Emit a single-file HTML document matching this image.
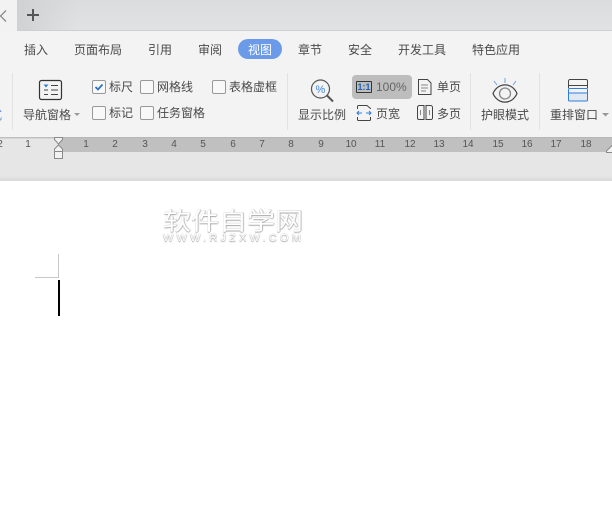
<!DOCTYPE html>
<html lang="zh"><head><meta charset="utf-8"><style>
*{box-sizing:border-box}
html,body{margin:0;padding:0;background:#fff}
#p{position:relative;width:612px;height:507px;overflow:hidden;background:#fff;font-family:"Liberation Sans","Noto Sans CJK SC",sans-serif;color:#444}
#p div,#p span.t{position:absolute;white-space:nowrap}
.t{font-size:12px;line-height:16px;color:#4a4a4a}
.cb{width:14px;height:14px;border:1px solid #999;border-radius:2px;background:#f8f8f8}
.sep{width:1px;background:#e2e2e2;top:73px;height:57px}
.r{top:139px;font-size:10px;line-height:12px;color:#555;width:20px;text-align:center}
svg{position:absolute;overflow:visible}
</style></head><body><div id="p">
<div style="left:0;top:0;width:612px;height:31px;background:linear-gradient(#dbdcde,#e1e2e4)"></div>
<div style="left:17px;top:0;width:60px;height:31px;background:linear-gradient(90deg,#d0d1d3,rgba(208,209,211,0))"></div>
<div style="left:0;top:30px;width:612px;height:1px;background:#cfcfcf"></div>
<div style="left:0;top:0;width:17px;height:31px;background:#f2f2f2"></div>
<svg style="left:0;top:0" width="40" height="31" fill="none"><path d="M6 10.500L0.500 16L6 21.500" stroke="#8a8a8a" stroke-width="1.300"/><path d="M27 15H39M33 9V21" stroke="#555" stroke-width="2"/></svg>
<div style="left:0;top:31px;width:612px;height:106px;background:#f3f3f3"></div>

<span class="t" style="left:24px;top:42px">插入</span>
<span class="t" style="left:74px;top:42px">页面布局</span>
<span class="t" style="left:148px;top:42px">引用</span>
<span class="t" style="left:198px;top:42px">审阅</span>
<div style="left:238px;top:39px;width:44px;height:20px;border-radius:10px;background:#6b9ae8"></div>
<span class="t" style="left:248px;top:42px;color:#fff">视图</span>
<span class="t" style="left:298px;top:42px">章节</span>
<span class="t" style="left:348px;top:42px">安全</span>
<span class="t" style="left:398px;top:42px">开发工具</span>
<span class="t" style="left:472px;top:42px">特色应用</span>

<div class="sep" style="left:12px"></div>
<div class="sep" style="left:287px"></div>
<div class="sep" style="left:470px"></div>
<div class="sep" style="left:539px"></div>

<span class="t" style="left:-10px;top:107px;color:#5b8fd0">式</span>

<svg style="left:39px;top:80px" width="23" height="21" fill="none"><rect x=".500" y=".500" width="22" height="19" rx="2" stroke="#333" stroke-width="1.200"/><path d="M4.500 4.500h5L7 7.500z" fill="#2f7ed8"/><path d="M12 5.500h7M12 10h7M12 14.500h7M5 10h4M5 14.500h4" stroke="#444"/></svg>
<span class="t" style="left:23px;top:107px">导航窗格</span>
<svg style="left:74px;top:113px" width="6" height="4"><path d="M0 0h6L3 3z" fill="#999"/></svg>

<div class="cb" style="left:92px;top:80px"></div>
<svg style="left:92px;top:80px" width="14" height="14" fill="none"><path d="M3.500 7l2.500 2.500L10.500 4.500" stroke="#2a72c8" stroke-width="1.800"/></svg>
<span class="t" style="left:109px;top:79px">标尺</span>
<div class="cb" style="left:140px;top:80px"></div>
<span class="t" style="left:157px;top:79px">网格线</span>
<div class="cb" style="left:212px;top:80px"></div>
<span class="t" style="left:229px;top:79px">表格虚框</span>
<div class="cb" style="left:92px;top:106px"></div>
<span class="t" style="left:109px;top:105px">标记</span>
<div class="cb" style="left:140px;top:106px"></div>
<span class="t" style="left:157px;top:105px">任务窗格</span>

<svg style="left:309px;top:79px" width="25" height="24" fill="none"><circle cx="11.500" cy="10" r="9" stroke="#555" stroke-width="1.200"/><path d="M18 16.500l6 6" stroke="#555" stroke-width="2"/><text x="6.500" y="14" font-size="11" fill="#3f86d8" font-family="Liberation Sans">%</text></svg>
<span class="t" style="left:298px;top:107px">显示比例</span>

<div style="left:352px;top:75px;width:60px;height:24px;border-radius:4px;background:#bdbdbd"></div>
<div style="left:356px;top:81px;width:16px;height:12px;border:1px solid #333;border-radius:1px;font-size:9px;line-height:10px;text-align:center;color:#1f64b8;font-weight:bold">1:1</div>
<span class="t" style="left:376px;top:79px;color:#666">100%</span>

<svg style="left:418px;top:79px" width="14" height="16" fill="none"><path d="M.5.5h9l3.500 3.500V15.500H.5z" stroke="#444"/><path d="M3 6h7M3 9h7M3 12h5" stroke="#888"/></svg>
<span class="t" style="left:437px;top:79px">单页</span>
<svg style="left:356px;top:105px" width="16" height="16" fill="none"><path d="M1.500 4V1.500a1 1 0 0 1 1-1H11l3.500 3V4M1.500 12v2.500a1 1 0 0 0 1 1h11a1 1 0 0 0 1-1V12" stroke="#444"/><path d="M1 8h5M10 8h5M3 6L1 8l2 2M13 6l2 2-2 2" stroke="#2f7ed8"/></svg>
<span class="t" style="left:376px;top:106px">页宽</span>
<svg style="left:417px;top:105px" width="16" height="15" fill="none"><path d="M.5 2.500a2 2 0 0 1 2-2H7v14H2a1.500 1.500 0 0 1-1.500-1.500zM9 .500h4.500a2 2 0 0 1 2 2V13a1.500 1.500 0 0 1-1.500 1.500H9z" stroke="#444"/><path d="M3.500 5v5M12.500 5v5" stroke="#888"/></svg>
<span class="t" style="left:437px;top:106px">多页</span>

<svg style="left:492px;top:78px" width="26" height="24" fill="none"><path d="M13 0v5M2 3l3 4M24 3l-3 4" stroke="#6d9ee0" stroke-width="1"/><path d="M1 15.500C6 4 20 4 25 15.500C20 27 6 27 1 15.500z" stroke="#444" stroke-width="1.200"/><circle cx="13" cy="15.500" r="5.500" stroke="#888" stroke-width="1.300"/></svg>
<span class="t" style="left:481px;top:107px">护眼模式</span>

<svg style="left:568px;top:79px" width="20" height="23" fill="none"><path d="M.5 9V2a1.500 1.500 0 0 1 1.500-1.500h16a1.500 1.500 0 0 1 1.500 1.500v7M.5 6.500h19" stroke="#444"/><rect x=".500" y="14" width="19" height="8" fill="#dfe8f3"/><rect x=".500" y="9.500" width="19" height="12.500" rx="1" stroke="#2f7ed8"/><path d="M.5 14h19" stroke="#2f7ed8"/></svg>
<span class="t" style="left:550px;top:107px">重排窗口</span>
<svg style="left:602px;top:113px" width="7" height="4"><path d="M0 0h7L3.500 3.500z" fill="#999"/></svg>

<div style="left:0;top:137px;width:612px;height:44px;background:#e6e6e6"></div>
<div style="left:58px;top:137px;width:554px;height:15px;background:#c0c0c0"></div>
<div style="left:0;top:137px;width:612px;height:2px;background:linear-gradient(#b4b4b4,rgba(200,200,200,.2))"></div>
<div style="left:0;top:176px;width:612px;height:5px;background:linear-gradient(rgba(230,230,230,0),#d8d8d8)"></div>

<div class="r" style="left:-10px">2</div><div class="r" style="left:18px">1</div>
<div class="r" style="left:76px">1</div><div class="r" style="left:105px">2</div><div class="r" style="left:135px">3</div><div class="r" style="left:164px">4</div><div class="r" style="left:193px">5</div><div class="r" style="left:223px">6</div><div class="r" style="left:252px">7</div><div class="r" style="left:281px">8</div><div class="r" style="left:311px">9</div><div class="r" style="left:341px">10</div><div class="r" style="left:370px">11</div><div class="r" style="left:400px">12</div><div class="r" style="left:429px">13</div><div class="r" style="left:458px">14</div><div class="r" style="left:488px">15</div><div class="r" style="left:517px">16</div><div class="r" style="left:546px">17</div><div class="r" style="left:576px">18</div>

<svg style="left:54px;top:137px" width="10" height="22"><path d="M.5.500h8v2L4.500 7 .5 2.500zM4.500 8l4 4v2.500h-8V12z" fill="#f2f2f2" stroke="#8a8a8a"/><rect x=".5" y="14.500" width="8" height="7" fill="#f2f2f2" stroke="#8a8a8a"/></svg>
<svg style="left:606px;top:137px" width="6" height="16"><path d="M6.500 8L.5 14v1.500h6z" fill="#f2f2f2" stroke="#8a8a8a"/></svg>

<div style="left:163px;top:206px;width:145px;font-size:28px;line-height:32px;color:#fff;text-shadow:0 1px 1px #aaa,1px 0 1px #bbb,0 -1px 0 #ddd;transform:scaleY(.86);transform-origin:0 50%;filter:blur(.3px)">软件自学网</div>
<div style="left:163px;top:233px;width:145px;font-size:10px;line-height:12px;letter-spacing:2.900px;color:#fff;text-shadow:0 0 1px #999,0 1px 1px #aaa;transform:scaleX(1.1);transform-origin:0 50%;filter:blur(.2px)">WWW.RJZXW.COM</div>

<div style="left:58px;top:254px;width:1px;height:24px;background:#c8c8c8"></div>
<div style="left:35px;top:277px;width:24px;height:1px;background:#c8c8c8"></div>
<div style="left:58px;top:280px;width:2px;height:36px;background:#000"></div>
</div></body></html>
